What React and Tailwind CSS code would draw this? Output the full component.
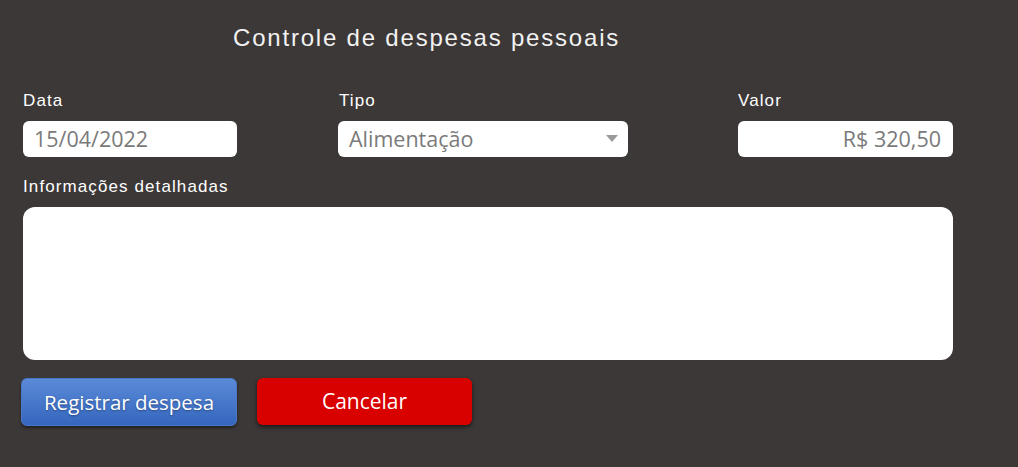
export default function App() {
  return (
    <div className="w-[1018px] h-[467px] bg-[#3c3837] font-['Liberation_Sans',Arial,sans-serif] text-white overflow-hidden">
      {/* Header */}
      <div className="pt-[23px] pl-[233px]">
        <h1 className="text-[24px] leading-[30px] tracking-[1.8px] text-[#f2f2f2]">Controle de despesas pessoais</h1>
      </div>

      {/* Top fields */}
      <div className="flex pl-[23px] pt-[38px]">
        <div className="w-[214px]">
          <label className="block text-[17px] leading-[20px] tracking-[1.1px] h-[30px]">Data</label>
          <div className="h-[36px] bg-white rounded-[6px] flex items-center px-[11px] font-['Open_Sans',sans-serif] text-[21.5px] text-[#7a7a7a]">
            15/04/2022
          </div>
        </div>
        <div className="w-[290px] ml-[101px]">
          <label className="block text-[17px] leading-[20px] tracking-[1.1px] h-[30px] pl-[1px]">Tipo</label>
          <div className="h-[36px] bg-white rounded-[6px] flex items-center justify-between px-[11px] font-['Open_Sans',sans-serif] text-[21.5px] text-[#7a7a7a]">
            <span>Alimentação</span>
            <svg width="12" height="8" viewBox="0 0 12 8" className="mr-[-1px]">
              <path d="M0 0h12L6 7z" fill="#9a9a9a" />
            </svg>
          </div>
        </div>
        <div className="w-[215px] ml-[110px]">
          <label className="block text-[17px] leading-[20px] tracking-[1.1px] h-[30px]">Valor</label>
          <div className="h-[36px] bg-white rounded-[6px] flex items-center justify-end px-[12px] font-['Open_Sans',sans-serif] text-[21.5px] text-[#7a7a7a]">
            R$ 320,50
          </div>
        </div>
      </div>

      {/* Details */}
      <div className="pl-[23px] pt-[20px] w-[953px]">
        <label className="block text-[17px] leading-[20px] tracking-[1.1px] h-[30px]">Informações detalhadas</label>
        <div className="h-[153px] bg-white rounded-[12px]"></div>
      </div>

      {/* Buttons */}
      <div className="flex gap-[20px] pl-[21px] pt-[18px]">
        <button className="w-[216px] h-[48px] rounded-[6px] bg-gradient-to-b from-[#5b8ad8] to-[#3466bd] border border-[#4a78c8] font-['Open_Sans',sans-serif] text-[20.5px] text-white [text-shadow:0_1px_2px_rgba(0,0,0,0.35)] shadow-[0_2px_3px_rgba(0,0,0,0.45)]">
          Registrar despesa
        </button>
        <button className="w-[215px] h-[47px] rounded-[6px] bg-[#d90000] font-['Open_Sans',sans-serif] text-[21px] text-white shadow-[0_2px_4px_rgba(0,0,0,0.6)]">
          Cancelar
        </button>
      </div>
    </div>
  );
}
